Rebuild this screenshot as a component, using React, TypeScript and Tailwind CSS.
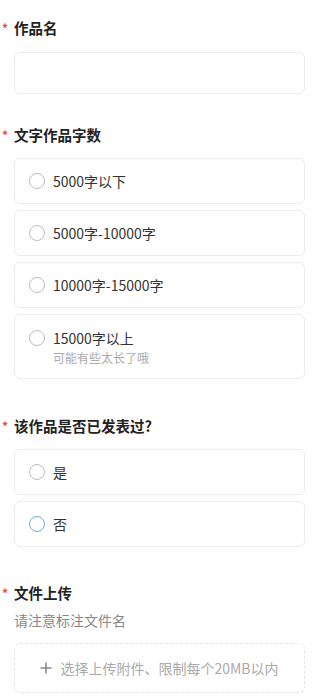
import React, { useState } from "react";

const font = { fontFamily: '"Noto Sans CJK SC", "Noto Sans", sans-serif' };

function Label({ children }: { children: React.ReactNode }) {
  return (
    <div className="relative flex items-center h-[20px] text-[14.5px] font-bold text-[#222]">
      <span className="absolute left-[-12px] top-[1px] text-[12px] text-[#e5483f]">*</span>
      {children}
    </div>
  );
}

function Radio({ active }: { active?: boolean }) {
  return (
    <span
      className={
        "inline-block w-[16px] h-[16px] rounded-full border-[1.5px] shrink-0 " +
        (active ? "border-[#63b6d3]" : "border-[#bdbdbd]")
      }
    />
  );
}

function Option({ text, hint, active }: { text: string; hint?: string; active?: boolean }) {
  if (hint) {
    return (
      <div className="h-[65px] rounded-[6px] border border-[#ececec] bg-white px-[14px] pt-[13px]">
        <div className="flex items-center gap-[8px] h-[20px]">
          <Radio active={active} />
          <span className="text-[14px] text-[#333]">{text}</span>
        </div>
        <div className="pl-[24px] text-[12px] text-[#aaa] leading-[18px] mt-[1px]">{hint}</div>
      </div>
    );
  }
  return (
    <div className="h-[46px] rounded-[6px] border border-[#ececec] bg-white px-[14px] flex items-center gap-[8px]">
      <Radio active={active} />
      <span className="text-[14px] text-[#333]">{text}</span>
    </div>
  );
}

export default function App() {
  const [name, setName] = useState("");
  return (
    <div className="w-[320px] min-h-[700px] bg-white pl-[14px] pr-[15px]" style={font}>
      <div className="pt-[18px]">
        <Label>作品名</Label>
        <input
          className="mt-[14px] block w-full h-[42px] rounded-[6px] border border-[#ececec] px-3 text-[14px] outline-none"
          value={name}
          onChange={(e) => setName(e.target.value)}
        />
      </div>

      <div className="pt-[31px]">
        <Label>文字作品字数</Label>
        <div className="mt-[13px] flex flex-col gap-[6px]">
          <Option text="5000字以下" />
          <Option text="5000字-10000字" />
          <Option text="10000字-15000字" />
          <Option text="15000字以上" hint="可能有些太长了哦" />
        </div>
      </div>

      <div className="pt-[37px]">
        <Label>该作品是否已发表过?</Label>
        <div className="mt-[13px] flex flex-col gap-[6px]">
          <Option text="是" />
          <Option text="否" active />
        </div>
      </div>

      <div className="pt-[36px]">
        <Label>文件上传</Label>
        <div className="mt-[7px] text-[14px] text-[#888] leading-[20px]">请注意标注文件名</div>
        <div className="mt-[13px] h-[50px] rounded-[6px] border border-dashed border-[#e4e4e4] flex items-center justify-center gap-[8px] text-[14px] text-[#aaa]">
          <svg width="12" height="12" viewBox="0 0 12 12" className="shrink-0">
            <path d="M6 0.5V11.5M0.5 6H11.5" stroke="#888" strokeWidth="1.6" />
          </svg>
          <span>选择上传附件、限制每个20MB以内</span>
        </div>
      </div>
    </div>
  );
}
